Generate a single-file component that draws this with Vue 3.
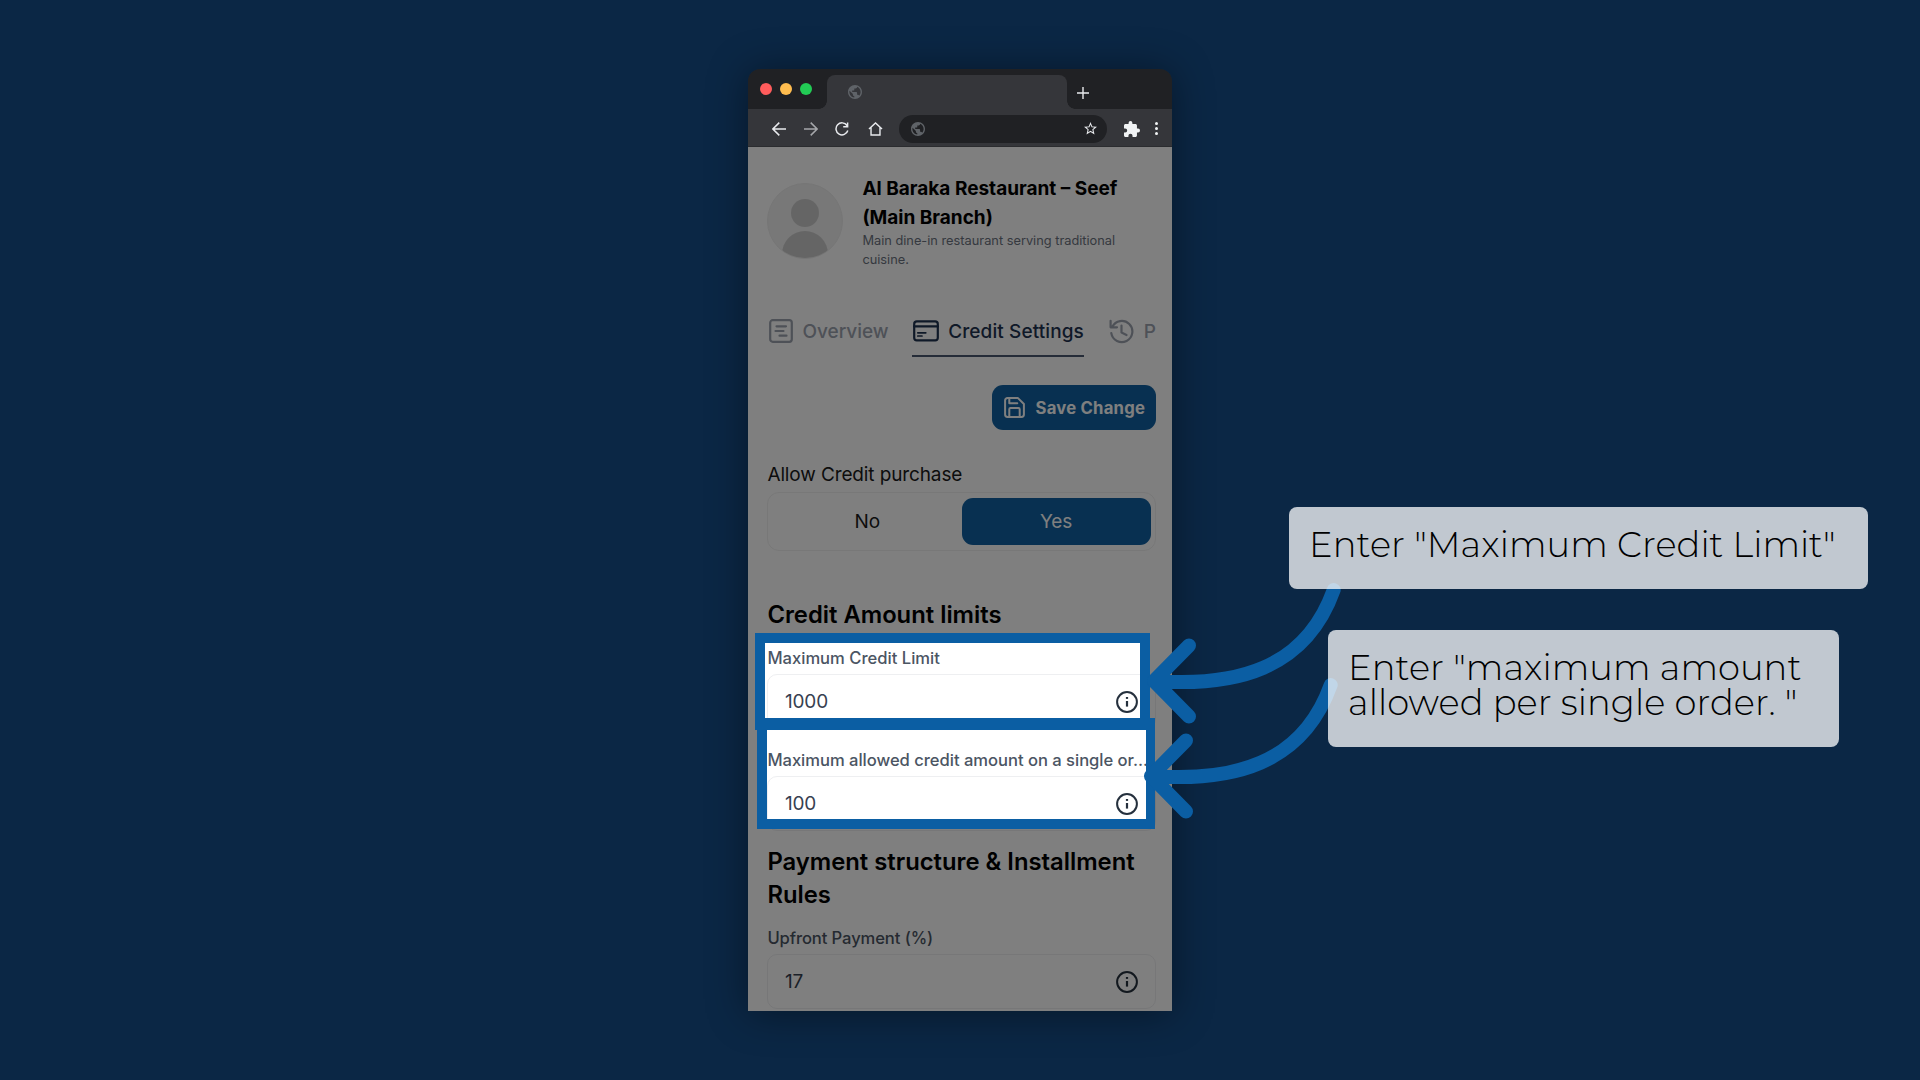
<script setup>
const arrows = [
  { id: 'limit', dx: 0, dy: 0 },
  { id: 'order', dx: -3, dy: 95 },
]
const dots = ['#ff5c5c', '#ffbd4f', '#22cc55']
</script>

<template>
  <div class="stage">
    <div class="window">
      <div class="titlebar">
        <div class="dots">
          <i v-for="c in dots" :key="c" :style="{ background: c }"></i>
        </div>
        <div class="tab">
          <svg class="globe" viewBox="2 2 20 20"><path d="M12 2C6.48 2 2 6.48 2 12s4.48 10 10 10 10-4.48 10-10S17.52 2 12 2zM4 12c0-.61.08-1.21.21-1.78L8.99 15v1c0 1.1.9 2 2 2v1.93C7.06 19.43 4 16.07 4 12zm13.89 5.4c-.26-.81-1-1.4-1.9-1.4h-1v-3c0-.55-.45-1-1-1h-6v-2h2c.55 0 1-.45 1-1V7h2c1.1 0 2-.9 2-2v-.41C17.92 5.77 20 8.65 20 12c0 2.08-.81 3.98-2.11 5.4z"/></svg>
        </div>
        <svg class="plus" viewBox="0 0 12 12"><path d="M6 0v12M0 6h12"/></svg>
      </div>
      <div class="toolbar">
        <svg class="nav back" viewBox="0 0 14 14"><path d="M14 7H1M7.300.6L.900 7l6.400 6.400"/></svg>
        <svg class="nav fwd" viewBox="0 0 14 14"><path d="M0 7h13M6.700.6L13.100 7l-6.400 6.400"/></svg>
        <svg class="nav reload" viewBox="0 0 14 14"><path d="M12 3.500A6 6 0 1 0 12.800 8.500M12.600.5V4.700H8.200"/></svg>
        <svg class="nav home" viewBox="0 0 16 15"><path d="M1 7.600 8 1l7 6.600M3.200 6v8h9.600V6"/></svg>
        <div class="address">
          <svg class="globe" viewBox="2 2 20 20"><path d="M12 2C6.480 2 2 6.480 2 12s4.480 10 10 10 10-4.480 10-10S17.520 2 12 2zM4 12c0-.610.080-1.210.210-1.780L8.990 15v1c0 1.100.900 2 2 2v1.930C7.060 19.430 4 16.070 4 12zm13.890 5.400c-.260-.810-1-1.400-1.900-1.400h-1v-3c0-.550-.450-1-1-1h-6v-2h2c.550 0 1-.450 1-1V7h2c1.100 0 2-.900 2-2v-.410C17.920 5.770 20 8.650 20 12c0 2.080-.810 3.980-2.110 5.400z"/></svg>
          <svg class="star" viewBox="2 2 20 19"><path d="M22 9.240l-7.190-.620L12 2 9.190 8.630 2 9.240l5.460 4.730L5.820 21 12 17.270 18.180 21l-1.630-7.030L22 9.240zM12 15.400l-3.760 2.270 1-4.280-3.320-2.880 4.380-.380L12 6.100l1.710 4.040 4.380.380-3.320 2.880 1 4.280L12 15.400z"/></svg>
        </div>
        <svg class="puzzle" viewBox="2 1 21 21"><path d="M20.500 11H19V7c0-1.100-.900-2-2-2h-4V3.500a2.500 2.500 0 0 0-5 0V5H4c-1.100 0-1.990.900-1.990 2v3.800H3.500a2.700 2.700 0 0 1 0 5.400H2V20c0 1.100.900 2 2 2h3.800v-1.500a2.700 2.700 0 0 1 5.400 0V22H17c1.100 0 2-.900 2-2v-4h1.500a2.500 2.500 0 0 0 0-5z"/></svg>
        <div class="kebab"><i></i><i></i><i></i></div>
      </div>

      <div class="page">
        <header class="profile">
          <div class="avatar"><b></b><u></u></div>
          <div class="who">
            <h1>Al Baraka Restaurant – Seef<br>(Main Branch)</h1>
            <p>Main dine-in restaurant serving traditional<br>cuisine.</p>
          </div>
        </header>

        <nav class="tabs">
          <div class="item first">
            <svg width="24" height="24" viewBox="0 0 24 24"><rect x="1.200" y="1.200" width="21.600" height="21.600" rx="2.500"/><path d="M7.500 7.300h9.500M6.500 12h8M10.500 16.700h7"/></svg>
            <span class="t-overview">Overview</span>
          </div>
          <div class="item active">
            <svg width="26" height="22" viewBox="0 0 26 22"><rect x="1.200" y="1.400" width="23.600" height="19" rx="2.600"/><path d="M1 6.300h24"/><path d="M4.800 12.800h8M4.800 16h4.200" stroke-width="1.700"/></svg>
            <span class="t-credit">Credit Settings</span>
          </div>
          <div class="item last">
            <svg width="25" height="25" viewBox="0 0 25 25"><path d="M2.300 14.200A10.600 10.600 0 1 0 3.300 7.800M1.600 1.800V8.300H8M12.500 6.500v7l5 2.500"/></svg>
            <span>P</span>
          </div>
        </nav>

        <button class="save">
          <svg width="21" height="21" viewBox="0 0 21 21"><path d="M3.500 1.100H14L19.900 7v10.500a2.400 2.400 0 0 1-2.400 2.400h-14a2.400 2.400 0 0 1-2.400-2.400v-14a2.400 2.400 0 0 1 2.400-2.400zM5.300 19.500V12.300a1.200 1.200 0 0 1 1.200-1.200h8a1.200 1.200 0 0 1 1.200 1.200v7.200M5.300 1.500V6.200h8"/></svg>
          <span>Save Change</span>
        </button>

        <div class="allow">Allow Credit purchase</div>
        <div class="toggle"><span>No</span><span class="on">Yes</span></div>

        <h2 class="amounts">Credit Amount limits</h2>
        <div class="field f1">
          <label class="l1">Maximum Credit Limit</label>
          <div class="input"><span>1000</span><svg class="info" viewBox="0 0 22 22"><circle cx="11" cy="11" r="9.900"/><path d="M11 10v5.600"/><path class="d" d="M11 6v1.900"/></svg></div>
        </div>
        <div class="field f2">
          <label class="l2">Maximum allowed credit amount on a single or...</label>
          <div class="input"><span>100</span><svg class="info" viewBox="0 0 22 22"><circle cx="11" cy="11" r="9.900"/><path d="M11 10v5.600"/><path class="d" d="M11 6v1.900"/></svg></div>
        </div>
        <h2 class="structure">Payment structure &amp; Installment<br>Rules</h2>
        <div class="field f3">
          <label class="l3">Upfront Payment (%)</label>
          <div class="input"><span>17</span><svg class="info" viewBox="0 0 22 22"><circle cx="11" cy="11" r="9.900"/><path d="M11 10v5.600"/><path class="d" d="M11 6v1.900"/></svg></div>
        </div>
        <div class="dim"></div>
      </div>
    </div>

    <div class="frame one"></div>
    <div class="frame two"></div>
    <svg class="arrows" width="1920" height="1080" viewBox="0 0 1920 1080">
      <g v-for="a in arrows" :key="a.id" :transform="`translate(${a.dx} ${a.dy})`">
        <path d="M1333.700 590C1305 670 1235 687 1154 681M1189 645.500L1154 681L1189 716.500" />
      </g>
    </svg>
    <div class="callout c1">Enter "Maximum Credit Limit"</div>
    <div class="callout c2">Enter "maximum amount<br>allowed per single order. "</div>
  </div>
</template>

<style>
body { margin: 0; background: #0b2745; }
</style>

<style scoped>
* { box-sizing: border-box; }
.stage { position: relative; width: 1920px; height: 1080px; overflow: hidden; background: #0b2745; padding: 69px 0 0 748px; font-family: "Inter", sans-serif; }
.window { width: 424px; height: 942px; border-radius: 12px 12px 0 0; box-shadow: 0 2px 40px rgba(0, 0, 0, .42); }
svg { display: block; flex: none; }
.titlebar { height: 40px; background: #202124; border-radius: 12px 12px 0 0; display: flex; align-items: flex-start; }
.dots { display: flex; gap: 8px; padding: 14px 0 0 11.600px; width: 78.700px; }
.dots i { width: 12px; height: 12px; border-radius: 50%; }
.tab { position: relative; width: 240px; height: 34px; margin-top: 6px; background: #35363a; border-radius: 8px 8px 0 0; padding: 10px 0 0 21.600px; }
.tab::before, .tab::after { content: ""; position: absolute; bottom: 0; width: 8px; height: 8px; }
.tab::before { left: -8px; background: radial-gradient(circle at 0 0, transparent 7.500px, #35363a 8px); }
.tab::after { right: -8px; background: radial-gradient(circle at 100% 0, transparent 7.500px, #35363a 8px); }
.globe { width: 14px; height: 14px; fill: #5f6368; }
.plus { width: 12px; height: 12px; margin: 18px 0 0 9.900px; stroke: #e8eaed; stroke-width: 1.400; }
.toolbar { height: 38px; background: #35363a; display: flex; align-items: center; padding: 2px 0 0 24.300px; border-bottom: 1px solid #2b2c2f; }
.nav { width: 14px; height: 14px; fill: none; stroke: #e8eaed; stroke-width: 1.500; }
.fwd { margin-left: 17.500px; stroke: #a5a7aa; }
.reload { margin-left: 17.500px; }
.home { width: 15px; margin-left: 18.700px; }
.address { width: 208px; height: 28px; margin-left: 16.500px; border-radius: 14px; background: #202124; display: flex; align-items: center; padding: 0 10.500px 0 12px; justify-content: space-between; }
.star { width: 13px; height: 12.500px; fill: #e8eaed; }
.puzzle { width: 16px; height: 16px; margin-left: 16.500px; fill: #f1f3f4; }
.kebab { display: flex; flex-direction: column; gap: 2px; margin-left: 15.400px; }
.kebab i { width: 3px; height: 3px; border-radius: 50%; background: #f1f3f4; }

.page { position: relative; height: 864px; overflow: hidden; background: #fff; padding: 28.200px 16px 0 19.400px; }
.dim { position: absolute; inset: 0; background: rgba(0, 0, 0, .5); clip-path: path(evenodd, "M0 0H424V864H0ZM17 495.500H392V571H17ZM19 582.500H398V672.500H19Z"); }
.profile { display: flex; align-items: center; height: 94.800px; }
.avatar { position: relative; top: -1.500px; width: 76px; height: 76px; border-radius: 50%; background: #f0f0f0; overflow: hidden; border: 1px solid #ececec; }
.avatar b { position: absolute; left: 23px; top: 15px; width: 28px; height: 28px; border-radius: 50%; background: #cbcbcb; }
.avatar u { position: absolute; left: 14px; top: 47px; width: 46px; height: 46px; border-radius: 50%; background: #cbcbcb; }
.who { margin-left: 19px; white-space: nowrap; }
h1 { margin: 0; font-size: 19px; line-height: 28.400px; font-weight: 700; color: #000; }
p { margin: -.8px 0 .8px; font-size: 12.800px; line-height: 19px; color: #6b7280; }
.tabs { display: flex; margin-top: 46.600px; height: 40.700px; overflow: hidden; font-size: 19px; line-height: 30.500px; font-weight: 500; color: #9ca3af; white-space: nowrap; }
.item { display: flex; height: 40.700px; align-items: flex-start; }
.item svg { fill: none; stroke: currentColor; stroke-width: 2.200; stroke-linecap: round; stroke-linejoin: round; margin-top: 2.700px; }
.first { width: 145px; padding-left: 2px; }
.first span { margin-left: 9px; }
.active { width: 171.800px; color: #1f3350; border-bottom: 2.300px solid #4a5870; padding-left: 1px; }
.active svg { margin-top: 3.700px; }
.active span { margin-left: 8.800px; letter-spacing: .1px; }
.last { margin-left: 25px; }
.last span { margin-left: 9.500px; }
.save { display: flex; align-items: center; margin: 27.900px 0 0 auto; width: 164px; height: 45px; padding: 0 0 0 12px; border: 0; border-radius: 11px; background: #1061a2; color: #fff; font: 700 16.700px/24px "Inter", sans-serif; letter-spacing: .22px; white-space: nowrap; }
.save svg { fill: none; stroke: #fff; stroke-width: 2; stroke-linejoin: round; stroke-linecap: round; }
.save span { margin-left: 10.500px; }
.allow { margin-top: 28.700px; height: 28.500px; font-size: 19px; line-height: 31px; letter-spacing: -.12px; color: #1a1a1a; }
.toggle { display: flex; height: 58.500px; margin-top: 4.800px; padding: 4.500px; border: 1px solid #f0f0f0; border-radius: 12px; font-size: 19px; line-height: 48px; text-align: center; color: #1a1a1a; }
.toggle span { flex: 1; letter-spacing: -.1px; }
.toggle .on { background: #1061a2; border-radius: 11px; color: #fff; }
h2 { margin: 0; font-size: 23.800px; line-height: 33px; font-weight: 600; color: #000; white-space: nowrap; }
.amounts { margin-top: 46.900px; }
.structure { margin-top: 14px; }
.field label { display: block; font-size: 16.600px; line-height: 24px; font-weight: 500; color: #4b5563; white-space: nowrap; }
.f1 { margin-top: 15.300px; }
.f2 { margin-top: 18.500px; }
.f3 { margin-top: 15px; }
.field .l2 { letter-spacing: -.03px; }
.field .l3 { letter-spacing: -.1px; }
.input { display: flex; justify-content: space-between; align-items: center; height: 55px; margin-top: 4.200px; border: 1px solid #eeeff1; border-radius: 10px; padding: 0 16.500px; font-size: 19px; line-height: 28px; color: #374151; }
.f2 .input, .f3 .input { padding-top: 2px; }
.input span { letter-spacing: -.15px; }
.info { width: 22px; height: 22px; fill: none; stroke: #25303d; stroke-width: 2; margin-right: .5px; }
.info path { stroke-width: 2.200; }

.frame { position: absolute; border: solid #0b5ea3; }
.one { left: 755px; top: 632.700px; width: 395px; height: 97px; border-width: 10px; border-bottom-width: 12px; }
.two { left: 757px; top: 718px; width: 398px; height: 111px; border-width: 11.500px 9px 10px 10px; }
.arrows { position: absolute; left: 0; top: 0; }
.arrows path { fill: none; stroke: #0b5ea3; stroke-width: 14; stroke-linecap: round; stroke-linejoin: round; }
.callout { position: absolute; background: rgba(255, 255, 255, .75); border-radius: 8px; font-family: "Montserrat", "Inter", sans-serif; font-weight: 300; font-size: 35.300px; line-height: 35px; letter-spacing: .06px; color: #000; white-space: nowrap; }
.c1 { left: 1289px; top: 507px; width: 579px; height: 82px; padding: 19.500px 0 0 20px; }
.c2 { left: 1328px; top: 630px; width: 511px; height: 117px; padding: 19.500px 0 0 20px; }
</style>
